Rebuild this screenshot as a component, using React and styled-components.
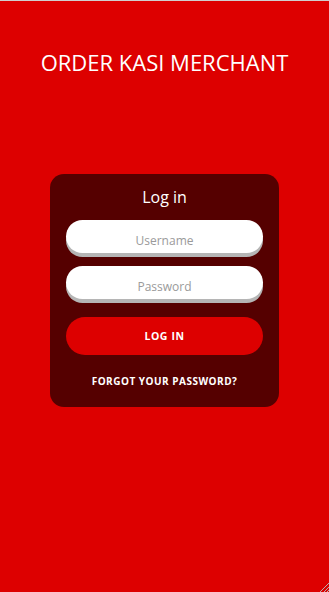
import React from "react";
import styled, { createGlobalStyle } from "styled-components";

const GlobalStyle = createGlobalStyle`
    html, body {
        margin: 0;
        padding: 0;
        height: 100%;
    }
    body {
        background: #dd0000;
        font-family: "Open Sans", "Liberation Sans", sans-serif;
    }
    #root {
        height: 100%;
    }
`

const Page = styled.div`
    position: relative;
    box-sizing: border-box;
    min-height: 100%;
    border-top: 1px solid #cfcfcf;
    display: flex;
    flex-direction: column;
    align-items: center;
`

const Title = styled.h1`
    margin: 46px 0 0;
    font-size: 22px;
    font-weight: 400;
    line-height: 30px;
    color: #fff;
    letter-spacing: 0;
`

const Card = styled.form`
    box-sizing: border-box;
    width: 229px;
    margin-top: 97px;
    padding: 12px 16px 19px;
    background: #550000;
    border-radius: 14px;
    display: flex;
    flex-direction: column;
`

const CardTitle = styled.h2`
    margin: 0 0 12px;
    font-size: 16px;
    font-weight: 400;
    line-height: 22px;
    color: #fff;
    text-align: center;
`

const Input = styled.input`
    box-sizing: border-box;
    width: 100%;
    height: 33px;
    margin-bottom: 13px;
    padding: 7px 12px 0;
    border: none;
    border-radius: 17px;
    background: #fff;
    box-shadow: 0 4px 0 #b5b5b5;
    font-family: inherit;
    font-size: 12px;
    text-align: center;
    color: #333;
    outline: none;

    &::placeholder {
        color: #9a9a9a;
    }
`

const Button = styled.button`
    height: 38px;
    margin-top: 5px;
    border: none;
    border-radius: 19px;
    background: #dd0000;
    color: #fff;
    font-family: inherit;
    font-size: 10.5px;
    font-weight: 700;
    letter-spacing: 0.6px;
    cursor: pointer;
`

const Forgot = styled.a`
    margin-top: 19px;
    font-size: 10px;
    font-weight: 700;
    letter-spacing: 0.5px;
    line-height: 14px;
    color: #fff;
    text-align: center;
    text-decoration: none;
    cursor: pointer;
`

const ResizeGrip = styled.svg`
    position: absolute;
    right: 0;
    bottom: 0;
`

const App = () => {
    return (
        <>
            <GlobalStyle />
            <Page>
                <Title>ORDER KASI MERCHANT</Title>
                <Card onSubmit={(e) => e.preventDefault()}>
                    <CardTitle>Log in</CardTitle>
                    <Input placeholder="Username" name="username" autoFocus />
                    <Input placeholder="Password" name="password" type="password" />
                    <Button type="submit">LOG IN</Button>
                    <Forgot>FORGOT YOUR PASSWORD?</Forgot>
                </Card>
                <ResizeGrip width="10" height="10" viewBox="0 0 10 10">
                    <path d="M10 1 L1 10 M10 5 L5 10 M10 8 L8 10" stroke="#b0b0b0" strokeWidth="1" />
                </ResizeGrip>
            </Page>
        </>
    );
}

export default App;
